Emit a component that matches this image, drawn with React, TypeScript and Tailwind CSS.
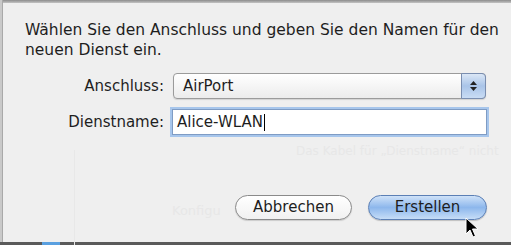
import React from "react";

export default function App() {
  return (
    <div className="relative w-[511px] h-[245px] overflow-hidden bg-[#efefef] text-[#1e1e1e]" style={{ fontFamily: '"DejaVu Sans", "Noto Sans", sans-serif' }}>
      {/* window frame edges */}
      <div className="absolute left-0 top-0 w-full h-[3px] bg-gradient-to-b from-[#8c8c8c] to-[#c4c4c4]" />
      <div className="absolute left-0 top-0 h-full w-[3px] bg-[#c9c9c9] border-r border-[#a9a9a9]" />
      <div className="absolute left-0 bottom-0 w-full h-[3px] bg-[#5a5a5a]" />
      <div className="absolute left-[42px] bottom-0 w-[18px] h-[3px] bg-[#5aa0e0]" />

      {/* faded background content */}
      <div className="absolute left-[74px] top-[150px] w-px h-[95px] bg-[#e8e8e8]" />
      <div className="absolute left-[296px] top-[142px] text-[12px] text-[#e7e7e7] whitespace-nowrap">Das Kabel für „Dienstname“ nicht</div>
      <div className="absolute left-[172px] top-[201px] text-[13px] text-[#e7e7e7] whitespace-nowrap">Konfigu</div>

      {/* sheet content */}
      <div className="relative pl-[25px] pr-[10px] pt-[20px]">
        <p className="text-[15.5px] leading-[20px]">
          Wählen Sie den Anschluss und geben Sie den Namen für den neuen Dienst ein.
        </p>

        <div className="mt-[13px] flex items-center">
          <div className="w-[148px] text-right pr-[9px] text-[15px]">Anschluss:</div>
          <div className="relative w-[313px] h-[26px] rounded-[4px] border border-[#9b9b9b] bg-gradient-to-b from-[#ffffff] to-[#ececec] flex items-center pl-[9px] text-[15px] shadow-[0_1px_1px_rgba(0,0,0,0.12)]">
            AirPort
            <div className="absolute right-[-1px] top-[-1px] w-[25px] h-[26px] rounded-r-[4px] border border-[#7a8eb0] bg-gradient-to-b from-[#dbe7f6] via-[#a9c4e8] to-[#c9dcf4] flex flex-col items-center justify-center gap-[2px]">
              <svg width="7" height="4" viewBox="0 0 7 4"><path d="M3.5 0L7 4H0z" fill="#222" /></svg>
              <svg width="7" height="4" viewBox="0 0 7 4"><path d="M0 0h7L3.5 4z" fill="#222" /></svg>
            </div>
          </div>
        </div>

        <div className="mt-[10px] flex items-center">
          <div className="w-[147px] text-right pr-[8px] text-[15px]">Dienstname:</div>
          <div className="w-[315px] h-[26px] bg-white border border-[#7f9cc4] shadow-[0_0_0_2px_#a7c6ec] flex items-center pl-[4px] text-[15px]">
            Alice-WLAN<span className="inline-block w-px h-[17px] bg-black ml-px" />
          </div>
        </div>

        <div className="mt-[60px] flex justify-end gap-[16px] pr-[14px]">
          <button className="w-[117px] h-[25px] rounded-full border border-[#8a8a8a] bg-gradient-to-b from-white to-[#f1f1f1] text-[15px] shadow-[0_1px_1px_rgba(0,0,0,0.15)]">Abbrechen</button>
          <button className="w-[119px] h-[25px] rounded-full border border-[#5b7fb5] bg-gradient-to-b from-[#cfe2f8] via-[#8db7ec] to-[#c6ddf7] text-[15px] shadow-[0_1px_1px_rgba(0,0,0,0.2)]">Erstellen</button>
        </div>
      </div>

      {/* cursor */}
      <svg className="absolute left-[465px] top-[217px]" width="14" height="22" viewBox="0 0 14 22">
        <path d="M1 1v16l4-4 3 7 2.5-1-3-7h5.5z" fill="#000" stroke="#fff" strokeWidth="1" />
      </svg>
    </div>
  );
}
